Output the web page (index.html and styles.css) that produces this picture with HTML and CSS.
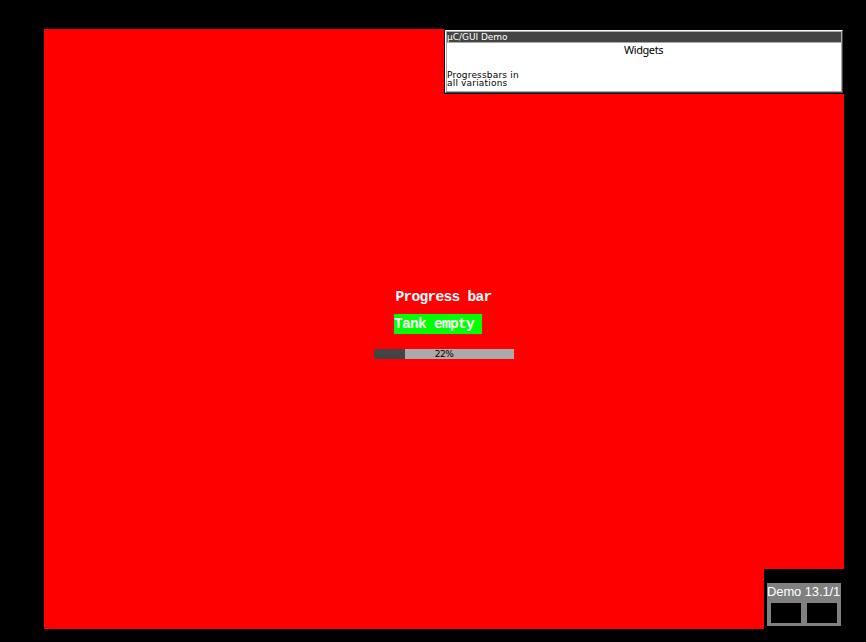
FILE: index.html
```html
<!DOCTYPE html>
<html lang="en">
<head>
<meta charset="utf-8">
<title>µC/GUI Demo</title>
<link rel="stylesheet" href="styles.css">
</head>
<body>
<main class="screen">
  <section class="window">
    <div class="frame">
      <div class="title"><span>µC/GUI Demo</span></div>
      <div class="content">
        <h1 class="heading">Widgets</h1>
        <p class="info">Progressbars in<br>all variations</p>
      </div>
    </div>
  </section>
  <section class="demo">
    <div class="label">Progress bar</div>
    <div class="status">Tank empty</div>
    <div class="bar"><div class="fill"></div><span class="percent">22%</span></div>
  </section>
  <aside class="corner">
    <div class="control">
      <div class="caption">Demo 13.1/1</div>
      <div class="buttons"><div class="button"></div><div class="button"></div></div>
    </div>
  </aside>
</main>
</body>
</html>
```
FILE: styles.css
```css
* { box-sizing: border-box; }
body { margin: 0; padding: 29px 22px 13px 44px; height: 642px; background: #000; overflow: hidden; }
.screen { width: 800px; height: 600px; background: #f00; display: grid; grid-template-rows: 65px 1fr 60px; }
.window { justify-self: end; width: 400px; height: 65px; background: #000; padding: 1px; }
.frame { height: 63px; background: #fff; border: 1px solid; border-color: #fff #444 #444 #fff; }
.title { height: 12px; border: 1px solid #aaa; background: #444; color: #fff; font: 9px/10px "DejaVu Sans", sans-serif; white-space: nowrap; letter-spacing: -0.03px; }
.title span { display: block; }
.content { height: 49px; border: 1px solid #aaa; border-top: 0; background: #fff; }
.heading { margin: 0; font: 11px/14px "Noto Sans", sans-serif; text-align: center; letter-spacing: -0.4px; text-indent: -1px; color: #000; }
.info { margin: 14px 0 0; font: 9px/8px "DejaVu Sans", sans-serif; color: #000; white-space: nowrap; letter-spacing: 0.18px; }
.demo { display: flex; flex-direction: column; align-items: center; padding-top: 193px; font: bold 14.5px/20px "Liberation Mono", monospace; letter-spacing: -0.7px; color: #fff; }
.label { height: 20px; width: 97px; white-space: nowrap; }
.status { width: 88px; height: 20px; margin: 7px 12px 0 0; background: #0f0; white-space: nowrap; }
.bar { display: grid; width: 140px; height: 10px; margin-top: 15px; background: #aaa; }
.fill, .percent { grid-area: 1 / 1; }
.fill { width: 31px; background: #444; }
.percent { font: 9px/10px "DejaVu Sans", sans-serif; color: #000; text-align: center; letter-spacing: -0.5px; }
.corner { justify-self: end; width: 80px; height: 60px; background: #000; padding: 14px 3px 3px; }
.control { height: 43px; background: #808080; }
.caption { height: 20px; color: #fff; font: 13px/17px "Liberation Sans", sans-serif; letter-spacing: -0.12px; white-space: nowrap; }
.buttons { display: flex; gap: 6px; padding-left: 4px; }
.button { width: 30px; height: 20px; background: #000; }
```
